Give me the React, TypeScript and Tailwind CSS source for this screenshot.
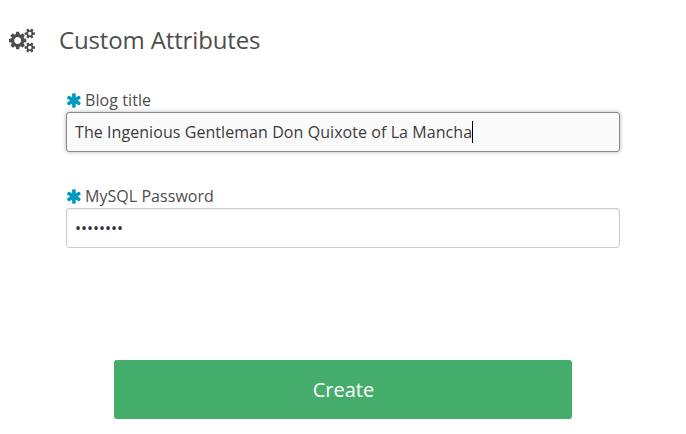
function Gears() {
  return (
    <svg viewBox="0 0 1920 1792" className="h-[25px] w-[26px]" fill="currentColor" aria-hidden="true">
      <path d="M896 896q0-106-75-181t-181-75-181 75-75 181 75 181 181 75 181-75 75-181zm768 512q0-52-38-90t-90-38-90 38-38 90q0 53 37.500 90.500t90.500 37.500 90.500-37.500 37.500-90.500zm0-1024q0-52-38-90t-90-38-90 38-38 90q0 53 37.500 90.500t90.500 37.500 90.500-37.500 37.500-90.500zm-384 421v185q0 10-7 19.500t-16 10.500l-155 24q-11 35-32 76 34 48 90 115 7 11 7 20 0 12-7 19-23 30-82.500 89.500t-78.500 59.500q-11 0-21-7l-115-90q-37 19-77 31-11 108-23 155-7 24-30 24h-186q-11 0-20-7.500t-10-17.500l-23-153q-34-10-75-31l-118 89q-7 7-20 7-11 0-21-8-144-133-144-160 0-9 7-19 10-14 41-53t47-61q-23-44-35-82l-152-24q-10-1-17-9.500t-7-19.500v-185q0-10 7-19.500t16-10.500l155-24q11-35 32-76-34-48-90-115-7-11-7-20 0-12 7-20 22-30 82-89t79-59q11 0 21 7l115 90q34-18 77-32 11-108 23-154 7-24 30-24h186q11 0 20 7.500t10 17.500l23 153q34 10 75 31l118-89q8-7 20-7 11 0 21 8 144 133 144 160 0 8-7 19-12 16-42 54t-45 60q23 48 34 82l152 23q10 2 17 10.500t7 19.500zm640 533v140q0 16-149 31-12 27-30 52 51 113 51 138 0 4-4 7-122 71-124 71-8 0-46-47t-52-68q-20 2-30 2t-30-2q-14 21-52 68t-46 47q-2 0-124-71-4-3-4-7 0-25 51-138-18-25-30-52-149-15-149-31v-140q0-16 149-31 13-29 30-52-51-113-51-138 0-4 4-7 4-2 35-20t59-34 30-16q8 0 46 46.500t52 67.500q20-2 30-2t30 2q51-71 92-112l6-2q4 0 124 70 4 3 4 7 0 25-51 138 17 23 30 52 149 15 149 31zm0-1024v140q0 16-149 31-12 27-30 52 51 113 51 138 0 4-4 7-122 71-124 71-8 0-46-47t-52-68q-20 2-30 2t-30-2q-14 21-52 68t-46 47q-2 0-124-71-4-3-4-7 0-25 51-138-18-25-30-52-149-15-149-31v-140q0-16 149-31 13-29 30-52-51-113-51-138 0-4 4-7 4-2 35-20t59-34 30-16q8 0 46 46.500t52 67.500q20-2 30-2t30 2q51-71 92-112l6-2q4 0 124 70 4 3 4 7 0 25-51 138 17 23 30 52 149 15 149 31z" />
    </svg>
  );
}

function Required() {
  return (
    <svg viewBox="112 0 1568 1792" className="mr-[3px] ml-px h-[17px] w-[15px]" fill="#0099c3" aria-hidden="true">
      <path d="M1482 1050q46 26 59.500 77.500t-12.500 97.500l-64 110q-26 46-77.500 59.500t-97.500-12.500l-266-153v307q0 52-38 90t-90 38h-128q-52 0-90-38t-38-90v-307l-266 153q-46 26-97.500 12.500t-77.500-59.500l-64-110q-26-46-12.500-97.500t59.500-77.500l266-154-266-154q-46-26-59.500-77.500t12.500-97.500l64-110q26-46 77.500-59.500t97.500 12.500l266 153v-307q0-52 38-90t90-38h128q52 0 90 38t38 90v307l266-153q46-26 97.500-12.500t77.500 59.500l64 110q26 46 12.500 97.500t-59.500 77.500l-266 154z" />
    </svg>
  );
}

export default function App() {
  return (
    <main className="h-[434px] w-[686px] overflow-hidden bg-white font-['Open_Sans',sans-serif] text-[#4d4d4d]">
      <header className="flex h-20 items-center pl-[9px]">
        <Gears />
        <h1 className="pl-6 text-2xl tracking-[-0.14px]">Custom Attributes</h1>
      </header>
      <form className="pl-[66px]">
        <div className="h-24 pt-2">
          <label className="flex h-6 items-center text-base tracking-[0.08px]"><Required />Blog title</label>
          <div className="flex h-10 w-[554px] items-center rounded-[3px] border border-[#888] bg-[#fafafa] pl-2 text-base tracking-[0.065px] text-[#3c3c3c] shadow-[0_0_4px_rgba(0,0,0,0.3)]">
            The Ingenious Gentleman Don Quixote of La Mancha<span className="h-[22px] w-px bg-black" />
          </div>
        </div>
        <div className="h-[184px] pt-2">
          <label className="flex h-6 items-center text-base tracking-[0.05px]"><Required />MySQL Password</label>
          <div className="flex h-10 w-[554px] items-center rounded-[3px] border border-[#ccc] bg-white pl-2 text-base text-[#333] shadow-[inset_0_1px_2px_rgba(0,0,0,0.08)]">••••••••</div>
        </div>
        <button type="button" className="ml-12 h-[59px] w-[458px] rounded-[3px] bg-[#44ad6b] pl-px text-xl text-white">Create</button>
      </form>
    </main>
  );
}
